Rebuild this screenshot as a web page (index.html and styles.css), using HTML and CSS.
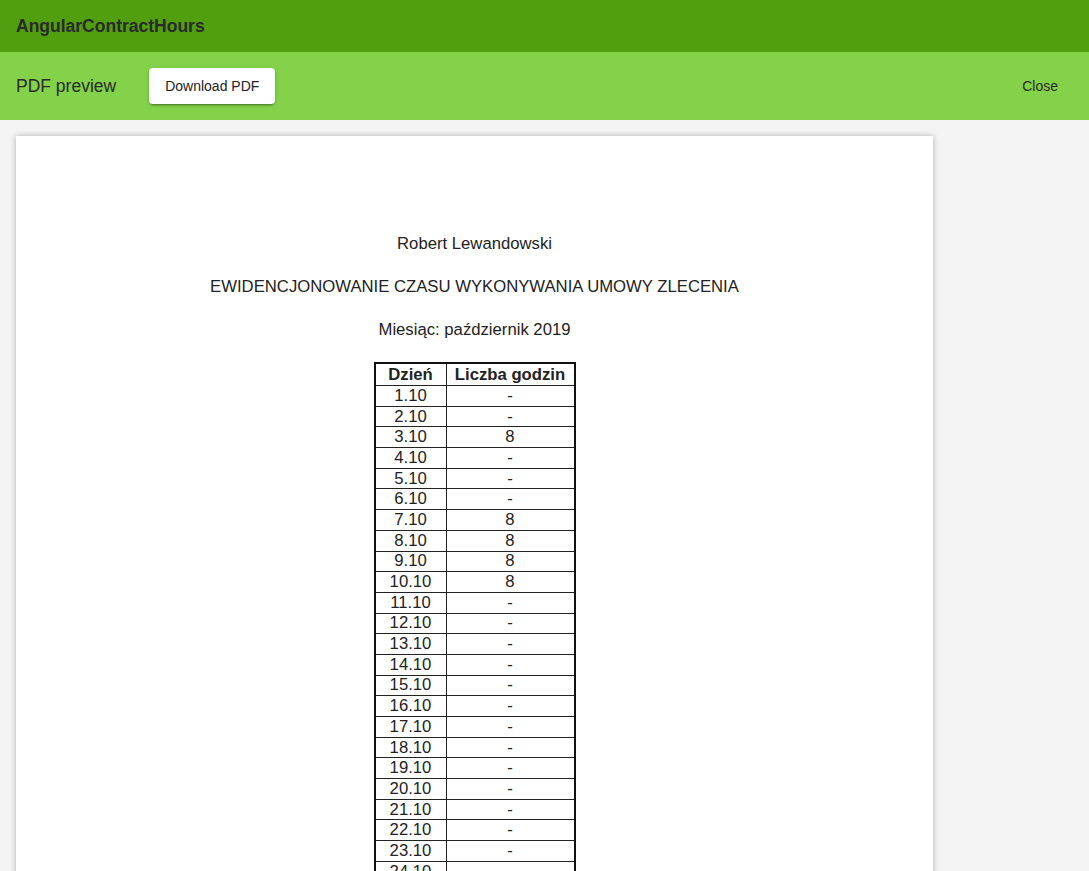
FILE: index.html
```html
<!DOCTYPE html>
<html lang="pl">
<head>
<meta charset="utf-8">
<title>AngularContractHours</title>
<link rel="stylesheet" href="styles.css">
</head>
<body>
<header class="app-bar">
  <span class="app-title">AngularContractHours</span>
</header>
<div class="sub-bar">
  <span class="sub-title">PDF preview</span>
  <button class="btn-raised">Download PDF</button>
  <span class="spacer"></span>
  <button class="btn-flat">Close</button>
</div>
<main class="content">
  <div class="page">
    <p class="doc-line name">Robert Lewandowski</p>
    <p class="doc-line">EWIDENCJONOWANIE CZASU WYKONYWANIA UMOWY ZLECENIA</p>
    <p class="doc-line month">Miesiąc: październik 2019</p>
    <table class="hours">
      <thead>
        <tr><th class="c-day">Dzień</th><th class="c-hours">Liczba godzin</th></tr>
      </thead>
      <tbody>
        <tr><td>1.10</td><td>-</td></tr>
        <tr><td>2.10</td><td>-</td></tr>
        <tr><td>3.10</td><td>8</td></tr>
        <tr><td>4.10</td><td>-</td></tr>
        <tr><td>5.10</td><td>-</td></tr>
        <tr><td>6.10</td><td>-</td></tr>
        <tr><td>7.10</td><td>8</td></tr>
        <tr><td>8.10</td><td>8</td></tr>
        <tr><td>9.10</td><td>8</td></tr>
        <tr><td>10.10</td><td>8</td></tr>
        <tr><td>11.10</td><td>-</td></tr>
        <tr><td>12.10</td><td>-</td></tr>
        <tr><td>13.10</td><td>-</td></tr>
        <tr><td>14.10</td><td>-</td></tr>
        <tr><td>15.10</td><td>-</td></tr>
        <tr><td>16.10</td><td>-</td></tr>
        <tr><td>17.10</td><td>-</td></tr>
        <tr><td>18.10</td><td>-</td></tr>
        <tr><td>19.10</td><td>-</td></tr>
        <tr><td>20.10</td><td>-</td></tr>
        <tr><td>21.10</td><td>-</td></tr>
        <tr><td>22.10</td><td>-</td></tr>
        <tr><td>23.10</td><td>-</td></tr>
        <tr><td>24.10</td><td>-</td></tr>
        <tr><td>25.10</td><td>-</td></tr>
        <tr><td>26.10</td><td>-</td></tr>
        <tr><td>27.10</td><td>-</td></tr>
        <tr><td>28.10</td><td>-</td></tr>
        <tr><td>29.10</td><td>-</td></tr>
        <tr><td>30.10</td><td>-</td></tr>
        <tr><td>31.10</td><td>-</td></tr>
      </tbody>
    </table>
  </div>
</main>
</body>
</html>
```
FILE: styles.css
```css
html, body {
  margin: 0;
  padding: 0;
}
body {
  background: #f4f4f4;
  font-family: "Liberation Sans", Arial, sans-serif;
  color: #212121;
  overflow: hidden;
  height: 871px;
}
.app-bar {
  height: 52px;
  background: #519e0e;
  display: flex;
  align-items: center;
  padding: 0 16px;
}
.app-title {
  font-size: 17.5px;
  font-weight: bold;
  color: #2a2a2a;
}
.sub-bar {
  height: 68px;
  background: #84d24a;
  display: flex;
  align-items: center;
  padding: 0 16px;
}
.sub-title {
  font-size: 17.5px;
  color: #2a2a2a;
  margin-right: 33px;
}
.spacer { flex: 1; }
.btn-raised {
  font-family: "Liberation Sans", Arial, sans-serif;
  font-size: 14px;
  color: #222;
  background: #fff;
  border: none;
  border-radius: 4px;
  height: 36px;
  padding: 0 16px;
  box-shadow: 0 3px 1px -2px rgba(0,0,0,.2), 0 2px 2px 0 rgba(0,0,0,.14), 0 1px 5px 0 rgba(0,0,0,.12);
}
.btn-flat {
  font-family: "Liberation Sans", Arial, sans-serif;
  font-size: 14px;
  color: #2a2a2a;
  background: transparent;
  border: none;
  height: 36px;
  padding: 0 0 0 16px;
  margin-right: 15px;
}
.content {
  padding: 16px 156px 0 16px;
}
.page {
  background: #fff;
  box-shadow: 0 0 6px rgba(0,0,0,.28);
  padding-top: 99px;
  min-height: 900px;
  color: #222;
}
.doc-line {
  margin: 0 0 25px;
  text-align: center;
  font-size: 16.7px;
  line-height: 18px;
}
.doc-line.month { margin-bottom: 23px; }
.hours {
  margin: 0 auto;
  border-collapse: collapse;
  border: 2px solid #111;
  font-size: 16.7px;
}
.hours th, .hours td {
  border: 1px solid #222;
  text-align: center;
  height: 19.7px;
  padding: 0;
  line-height: 18px;
}
.hours th { font-weight: bold; height: 21px; }
.c-day { width: 70px; }
.c-hours { width: 127px; }
```
